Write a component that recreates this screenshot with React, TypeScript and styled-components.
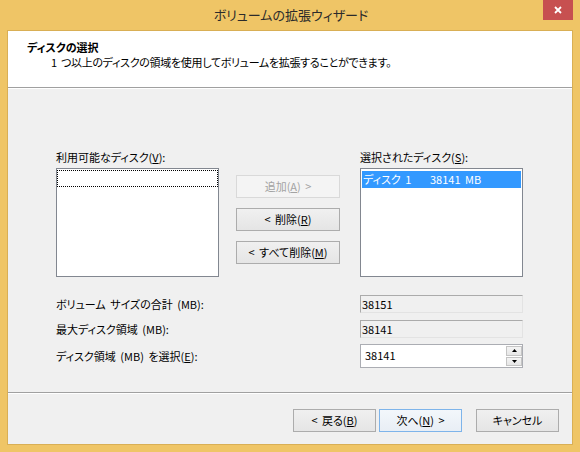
import React from 'react';
import styled, { createGlobalStyle, css } from 'styled-components';

const FONT = `"Noto Sans CJK JP", "Noto Sans", sans-serif`;

const GlobalStyle = createGlobalStyle`
  html, body {
    margin: 0;
    padding: 0;
    background: #efc566;
  }
  body {
    font-family: ${FONT};
    font-size: 11px;
    word-spacing: 2px;
    color: #000;
  }
  * {
    box-sizing: border-box;
    font-feature-settings: "palt";
  }
`;

const Window = styled.div`
  width: 580px;
  height: 452px;
  background: #efc566;
  display: flex;
  flex-direction: column;
`;

const TitleBar = styled.div`
  height: 30px;
  flex-shrink: 0;
  display: grid;
  grid-template-columns: 1fr auto 1fr;
`;

const Title = styled.div`
  grid-column: 2;
  align-self: center;
  font-size: 13px;
  line-height: 20px;
  color: #2b2b2b;
  padding-left: 2px;
`;

const CloseButton = styled.button`
  grid-column: 3;
  justify-self: end;
  align-self: start;
  width: 30px;
  height: 20px;
  margin-right: 7px;
  padding: 0;
  border: none;
  background: #c75050;
  display: flex;
  align-items: center;
  justify-content: center;
`;

const Client = styled.div`
  flex: 1;
  min-height: 0;
  margin: 0 7px 7px;
  border: 1px solid #d9af55;
  background: #f0f0f0;
  display: flex;
  flex-direction: column;
`;

const Header = styled.div`
  height: 57px;
  flex-shrink: 0;
  background: #fff;
  border-bottom: 1px solid #a0a0a0;
  padding: 9px 0 0 19px;
  line-height: 15px;
`;

const HeaderTitle = styled.div`
  font-weight: bold;
`;

const HeaderText = styled.div`
  margin-left: 24px;
  letter-spacing: -0.3px;
`;

const Body = styled.div`
  flex: 1;
  border-top: 1px solid #fff;
  padding: 60px 0 0 48px;
`;

const ListsRow = styled.div`
  display: flex;
  align-items: flex-start;
`;

const ListColumn = styled.div`
  width: 163px;
  display: flex;
  flex-direction: column;
  gap: 3px;
`;

const Label = styled.div`
  line-height: 16px;
  white-space: nowrap;
`;

const ListBox = styled.div`
  height: 109px;
  border: 1px solid #828790;
  background: #fff;
  padding: 1px 0;
`;

const ListItem = styled.div<{ $selected?: boolean; $focused?: boolean }>`
  height: 17px;
  line-height: 16px;
  display: flex;
  padding-left: 1px;
  white-space: nowrap;
  ${({ $focused }) =>
    $focused &&
    css`
      border: 1px dotted #000;
    `}
  ${({ $selected }) =>
    $selected &&
    css`
      background: #3399ff;
      color: #fff;
      margin: 1px 1px 0;
    `}
`;

const ItemCell = styled.span<{ $width?: number }>`
  width: ${({ $width }) => ($width ? `${$width}px` : 'auto')};
`;

const ButtonStack = styled.div`
  width: 104px;
  margin: 26px 20px 0 17px;
  display: flex;
  flex-direction: column;
  gap: 10px;
`;

const Button = styled.button<{ $default?: boolean; $width?: number }>`
  height: 23px;
  width: ${({ $width }) => ($width ? `${$width}px` : '100%')};
  padding: 0;
  font-family: ${FONT};
  font-size: 11px;
  word-spacing: 2px;
  line-height: 21px;
  color: #000;
  border: 1px solid #acacac;
  background: linear-gradient(#f0f0f0, #e5e5e5);
  white-space: nowrap;
  ${({ $default }) =>
    $default &&
    css`
      border-color: #7eb4ea;
      background: linear-gradient(#f3f7fb, #e8eef5);
    `}
  &:disabled {
    color: #a3a3a3;
    border-color: #d9d9d9;
    background: #f4f4f4;
  }
`;

const Fields = styled.div`
  margin-top: 18px;
  display: grid;
  grid-template-columns: 304px 163px;
  align-items: center;
`;

const FieldLabel = styled(Label)<{ $gap?: number }>`
  margin-top: ${({ $gap }) => $gap ?? 0}px;
`;

const ReadOnlyField = styled.div<{ $gap?: number }>`
  height: 18px;
  margin-top: ${({ $gap }) => $gap ?? 0}px;
  border-style: solid;
  border-width: 1px;
  border-color: #ababab #e3e3e3 #e3e3e3 #ababab;
  background: #f0f0f0;
  padding-left: 1px;
  line-height: 16px;
`;

const SpinField = styled.div<{ $gap?: number }>`
  height: 24px;
  margin-top: ${({ $gap }) => $gap ?? 0}px;
  border: 1px solid #abadb3;
  background: #fff;
  display: flex;
  align-items: stretch;
`;

const SpinValue = styled.div`
  flex: 1;
  padding-left: 4px;
  line-height: 21px;
`;

const SpinButtons = styled.div`
  width: 16px;
  padding: 1px 0;
  display: flex;
  flex-direction: column;
  gap: 1px;
`;

const SpinButton = styled.div`
  flex: 1;
  border: 1px solid #c4c4c4;
  background: linear-gradient(#f4f4f4, #e6e6e6);
  display: flex;
  align-items: center;
  justify-content: center;
`;

const Footer = styled.div`
  flex-shrink: 0;
  height: 52px;
  border-top: 1px solid #a0a0a0;
  box-shadow: inset 0 1px 0 #fff;
  padding: 16px 13px 0 0;
  display: flex;
  justify-content: flex-end;
`;

const FooterGroup = styled.div<{ $gap: number }>`
  display: flex;
  gap: ${({ $gap }) => $gap}px;
  margin-left: 14px;
`;

const Arrow = ({ up }: { up?: boolean }) => (
  <svg width="5" height="3" viewBox="0 0 5 3">
    <polygon points={up ? '2.5,0 5,3 0,3' : '0,0 5,0 2.5,3'} fill="#000" />
  </svg>
);

export default function App() {
  return (
    <Window>
      <GlobalStyle />
      <TitleBar>
        <Title>ボリュームの拡張ウィザード</Title>
        <CloseButton aria-label="閉じる">
          <svg width="8" height="8" viewBox="0 0 8 8">
            <path d="M1 1 L7 7 M7 1 L1 7" stroke="#fff" strokeWidth="1.8" />
          </svg>
        </CloseButton>
      </TitleBar>
      <Client>
        <Header>
          <HeaderTitle>ディスクの選択</HeaderTitle>
          <HeaderText>1 つ以上のディスクの領域を使用してボリュームを拡張することができます。</HeaderText>
        </Header>
        <Body>
          <ListsRow>
            <ListColumn>
              <Label>
                利用可能なディスク(<u>V</u>):
              </Label>
              <ListBox>
                <ListItem $focused />
              </ListBox>
            </ListColumn>
            <ButtonStack>
              <Button disabled>
                追加(<u>A</u>) &gt;
              </Button>
              <Button>
                &lt; 削除(<u>R</u>)
              </Button>
              <Button>
                &lt; すべて削除(<u>M</u>)
              </Button>
            </ButtonStack>
            <ListColumn>
              <Label>
                選択されたディスク(<u>S</u>):
              </Label>
              <ListBox>
                <ListItem $selected>
                  <ItemCell $width={67}>ディスク 1</ItemCell>
                  <ItemCell>38141 MB</ItemCell>
                </ListItem>
              </ListBox>
            </ListColumn>
          </ListsRow>
          <Fields>
            <FieldLabel>ボリューム サイズの合計 (MB):</FieldLabel>
            <ReadOnlyField>38151</ReadOnlyField>
            <FieldLabel $gap={7}>最大ディスク領域 (MB):</FieldLabel>
            <ReadOnlyField $gap={7}>38141</ReadOnlyField>
            <FieldLabel $gap={6}>
              ディスク領域 (MB) を選択(<u>E</u>):
            </FieldLabel>
            <SpinField $gap={6}>
              <SpinValue>38141</SpinValue>
              <SpinButtons>
                <SpinButton>
                  <Arrow up />
                </SpinButton>
                <SpinButton>
                  <Arrow />
                </SpinButton>
              </SpinButtons>
            </SpinField>
          </Fields>
        </Body>
        <Footer>
          <FooterGroup $gap={3}>
            <Button $width={83}>
              &lt; 戻る(<u>B</u>)
            </Button>
            <Button $width={83} $default>
              次へ(<u>N</u>) &gt;
            </Button>
          </FooterGroup>
          <FooterGroup $gap={0}>
            <Button $width={83}>キャンセル</Button>
          </FooterGroup>
        </Footer>
      </Client>
    </Window>
  );
}
